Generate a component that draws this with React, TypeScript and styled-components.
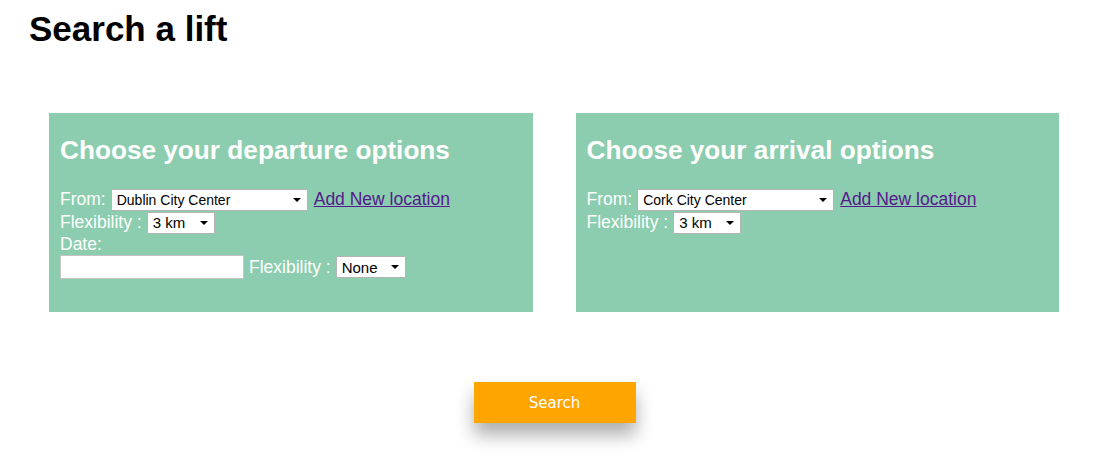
import styled, { createGlobalStyle } from "styled-components";

const GlobalStyle = createGlobalStyle`
  body {
    margin: 0;
    background: #ffffff;
    font-family: "Liberation Sans", Arial, sans-serif;
  }
`;

const Page = styled.div`
  padding: 9px 0 40px;
`;

const Title = styled.h1`
  margin: 0 0 0 29px;
  font-size: 35px;
  line-height: 40px;
  font-weight: bold;
  color: #000;
`;

const Panels = styled.div`
  display: flex;
  gap: 43px;
  padding: 64px 50px 0 49px;
`;

const Panel = styled.section`
  flex: 1;
  background: #8bcdae;
  color: #ffffff;
  padding: 0 11px 32px;
  font-size: 17.5px;
`;

const PanelTitle = styled.h2`
  margin: 22px 0 23px;
  font-size: 26.2px;
  line-height: 30px;
  font-weight: bold;
`;

const Row = styled.div<{ $h?: number }>`
  display: flex;
  align-items: center;
  gap: 5px;
  height: ${(p) => p.$h ?? 23}px;
`;

const SelectWrap = styled.span<{ $w: number }>`
  position: relative;
  display: inline-block;
  width: ${(p) => p.$w}px;
  height: 22px;

  &::after {
    content: "";
    position: absolute;
    right: 7px;
    top: 9px;
    border-left: 4px solid transparent;
    border-right: 4px solid transparent;
    border-top: 4px solid #000;
    pointer-events: none;
  }
`;

const Select = styled.select<{ $fs: number }>`
  appearance: none;
  width: 100%;
  height: 100%;
  box-sizing: border-box;
  margin: 0;
  padding: 0 16px 0 5px;
  border: 1px solid #b4b4b4;
  border-radius: 1px;
  background: #ffffff;
  color: #000;
  font-family: "Liberation Sans", Arial, sans-serif;
  font-size: ${(p) => p.$fs}px;
  outline: none;
`;

const AddLink = styled.a`
  margin-left: 1px;
  color: #551a8b;
  text-decoration: underline;
  cursor: pointer;
`;

const DateInput = styled.input`
  width: 184px;
  height: 24px;
  box-sizing: border-box;
  margin: 0;
  border: 1px solid #c4c4c4;
  background: #ffffff;
  font-size: 14px;
`;

const Footer = styled.div`
  display: flex;
  justify-content: center;
  padding-top: 70px;
`;

const SearchButton = styled.button`
  width: 162px;
  height: 41px;
  border: none;
  background: #ffa500;
  color: #ffffff;
  font-family: "DejaVu Sans", Tahoma, sans-serif;
  font-size: 15px;
  box-shadow: 0 12px 18px rgba(0, 0, 0, 0.32);
  cursor: pointer;
`;

const Dropdown = ({
  w,
  fs,
  value,
  options,
}: {
  w: number;
  fs: number;
  value: string;
  options: string[];
}) => (
  <SelectWrap $w={w}>
    <Select $fs={fs} defaultValue={value}>
      {options.map((o) => (
        <option key={o}>{o}</option>
      ))}
    </Select>
  </SelectWrap>
);

const locations = ["Dublin City Center", "Cork City Center", "Galway City Center"];
const distances = ["1 km", "3 km", "5 km", "10 km"];

export default function App() {
  return (
    <Page>
      <GlobalStyle />
      <Title>Search a lift</Title>
      <Panels>
        <Panel>
          <PanelTitle>Choose your departure options</PanelTitle>
          <Row>
            From:
            <Dropdown w={197} fs={14} value="Dublin City Center" options={locations} />
            <AddLink href="#">Add New location</AddLink>
          </Row>
          <Row>
            Flexibility :
            <Dropdown w={68} fs={15} value="3 km" options={distances} />
          </Row>
          <Row $h={20}>Date:</Row>
          <Row $h={26}>
            <DateInput type="text" />
            Flexibility :
            <Dropdown w={70} fs={15} value="None" options={["None", "1 hour", "2 hours"]} />
          </Row>
        </Panel>
        <Panel>
          <PanelTitle>Choose your arrival options</PanelTitle>
          <Row>
            From:
            <Dropdown w={197} fs={14} value="Cork City Center" options={locations} />
            <AddLink href="#">Add New location</AddLink>
          </Row>
          <Row>
            Flexibility :
            <Dropdown w={68} fs={15} value="3 km" options={distances} />
          </Row>
        </Panel>
      </Panels>
      <Footer>
        <SearchButton>Search</SearchButton>
      </Footer>
    </Page>
  );
}
